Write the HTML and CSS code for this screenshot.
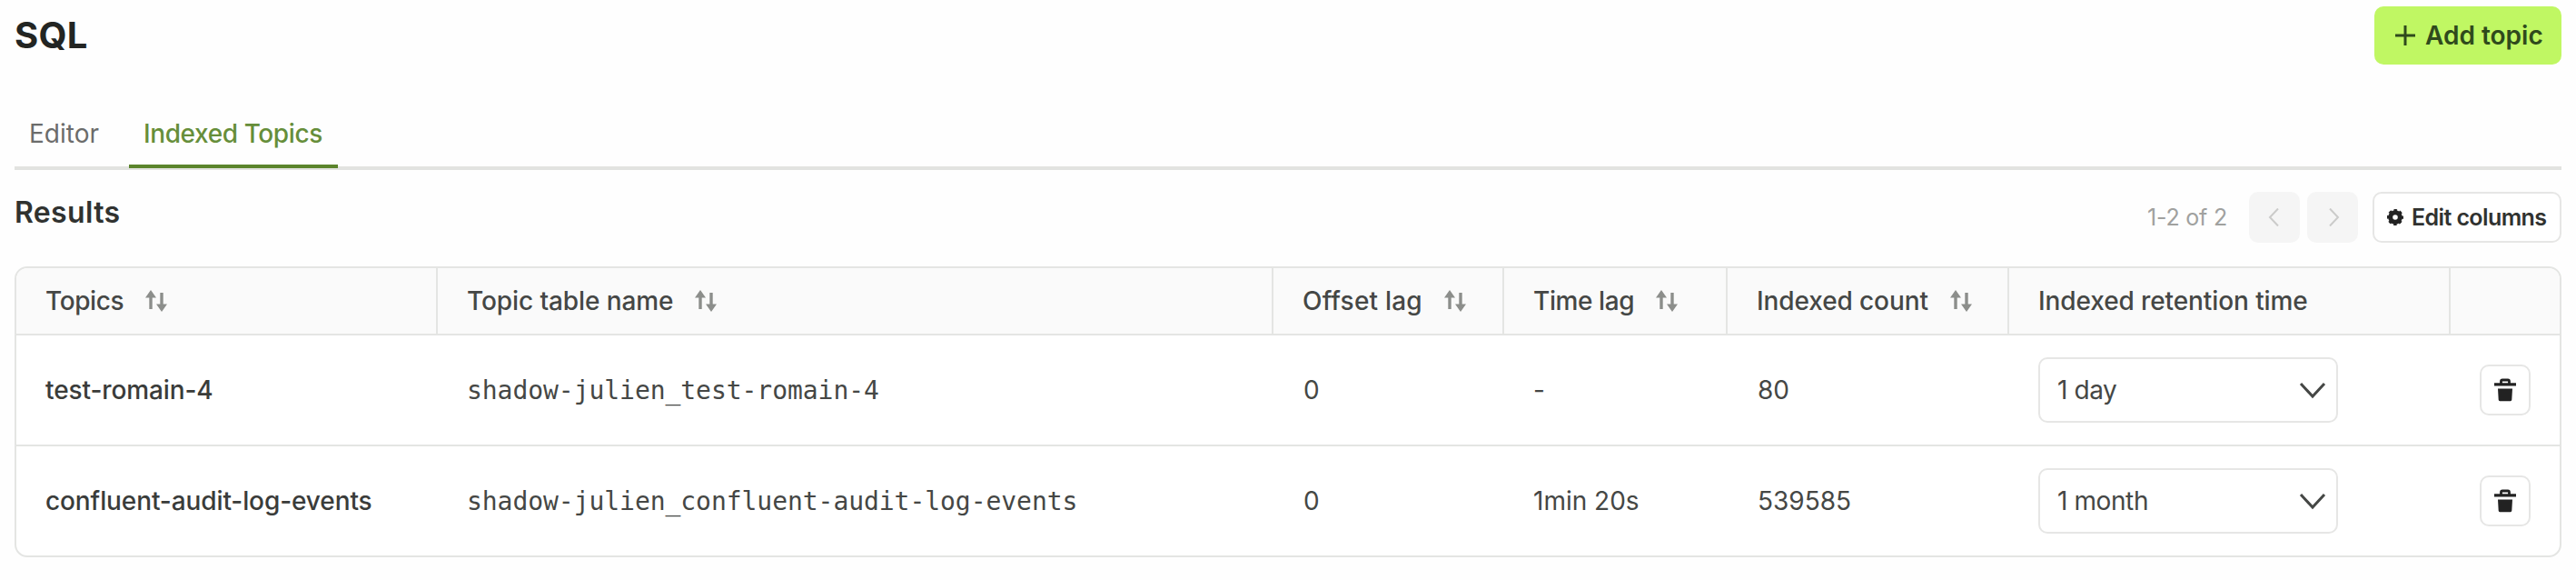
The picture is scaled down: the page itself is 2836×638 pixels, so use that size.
FILE: index.html
```html
<!DOCTYPE html>
<html lang="en">
<head>
<meta charset="utf-8">
<title>SQL</title>
<link rel="stylesheet" href="styles.css">
</head>
<body>
<svg class="defs" aria-hidden="true">
  <symbol id="sort" viewBox="0 0 24 24">
    <path d="M6 21V6M18 3v15" stroke="currentColor" stroke-width="3.400" fill="none"/>
    <path d="M6 0l6 8.500H0zM18 24l6-8.500H12z" fill="currentColor"/>
  </symbol>
  <symbol id="trash" viewBox="0 0 24 26">
    <path d="M7.500 6V3.500a1.500 1.500 0 0 1 1.500-1.500h6a1.500 1.500 0 0 1 1.500 1.500V6" stroke="currentColor" stroke-width="2.800" fill="none"/>
    <path d="M0 5.300h24v3.200H0zM4 11.500h16l-0.700 12.300a1.500 1.500 0 0 1-1.500 1.400H6.200a1.500 1.500 0 0 1-1.500-1.400z" fill="currentColor"/>
  </symbol>
  <symbol id="chevron" viewBox="0 0 30 20">
    <path d="M2 3l13 14L28 3" stroke="currentColor" stroke-width="3" fill="none"/>
  </symbol>
</svg>
<main class="page">
  <header class="top">
    <h1 class="title">SQL</h1>
    <button class="add">
      <svg class="plus" viewBox="0 0 22 22"><path d="M11 0v22M0 11h22" stroke="currentColor" stroke-width="3"/></svg>
      <span>Add topic</span>
    </button>
  </header>
  <nav class="tabs">
    <a class="tab">Editor</a>
    <a class="tab tab-active">Indexed Topics</a>
  </nav>
  <section class="bar">
    <h2 class="results">Results</h2>
    <div class="actions">
      <span class="count">1-2 of 2</span>
      <button class="pager prev"><svg viewBox="0 0 12 20"><path d="M11 0.500L2 10l9 9.500" stroke="currentColor" stroke-width="2" fill="none"/></svg></button>
      <button class="pager next"><svg viewBox="0 0 12 20"><path d="M1 0.500L10 10l-9 9.500" stroke="currentColor" stroke-width="2" fill="none"/></svg></button>
      <button class="edit">
        <svg class="gear" viewBox="-9 -9 18 18">
          <circle r="5.300" fill="none" stroke="currentColor" stroke-width="5"/>
          <circle r="7.800" fill="none" stroke="currentColor" stroke-width="2.400" stroke-dasharray="3.463 2.663" stroke-dashoffset="1.731"/>
        </svg>
        <span>Edit columns</span>
      </button>
    </div>
  </section>
  <div class="table">
    <div class="row head">
      <div class="cell tight"><span>Topics</span><svg class="sort"><use href="#sort"/></svg></div>
      <div class="cell"><span>Topic table name</span><svg class="sort"><use href="#sort"/></svg></div>
      <div class="cell loose"><span>Offset lag</span><svg class="sort"><use href="#sort"/></svg></div>
      <div class="cell tight"><span>Time lag</span><svg class="sort"><use href="#sort"/></svg></div>
      <div class="cell"><span>Indexed count</span><svg class="sort"><use href="#sort"/></svg></div>
      <div class="cell"><span>Indexed retention time</span></div>
      <div class="cell"></div>
    </div>
    <div class="row">
      <div class="cell topic">test-romain-4</div>
      <div class="cell mono">shadow-julien_test-romain-4</div>
      <div class="cell number">0</div>
      <div class="cell">-</div>
      <div class="cell number">80</div>
      <div class="cell"><div class="select"><span>1 day</span><svg class="chevron"><use href="#chevron"/></svg></div></div>
      <div class="cell"><button class="delete"><svg class="trash"><use href="#trash"/></svg></button></div>
    </div>
    <div class="row">
      <div class="cell topic">confluent-audit-log-events</div>
      <div class="cell mono">shadow-julien_confluent-audit-log-events</div>
      <div class="cell number">0</div>
      <div class="cell">1min 20s</div>
      <div class="cell number">539585</div>
      <div class="cell"><div class="select"><span>1 month</span><svg class="chevron"><use href="#chevron"/></svg></div></div>
      <div class="cell"><button class="delete"><svg class="trash"><use href="#trash"/></svg></button></div>
    </div>
  </div>
</main>
</body>
</html>
```

FILE: styles.css
```css
* { box-sizing: border-box; }
body { margin: 0; background: #fefefe; color: #454745; font-family: Inter, "Liberation Sans", sans-serif; font-size: 28px; }
button { margin: 0; padding: 0; border: 0; font: inherit; color: inherit; background: none; }
svg { display: block; flex: none; }
.defs { position: absolute; width: 0; height: 0; }
.page { display: flex; flex-direction: column; padding: 7px 16px 0; }
.top { display: flex; justify-content: space-between; height: 64px; }
.title { margin: 0; font-size: 40px; font-weight: 700; line-height: 64px; letter-spacing: 0.3px; color: #232523; }
.add { display: flex; align-items: center; gap: 11px; width: 206px; height: 64px; padding-left: 23px; border-radius: 10px; background: #c0f763; color: #2f4a1c; font-size: 28px; font-weight: 600; }
.plus { width: 22px; height: 22px; }
.tabs { display: flex; height: 116px; padding-top: 46px; border-bottom: 4px solid #e2e3e0; }
.tab { display: flex; width: 126px; height: 68px; padding-left: 16px; font-size: 28px; font-weight: 400; line-height: 60px; color: #6b6c6b; }
.tab-active { width: 230px; border-bottom: 4px solid #5b842c; color: #668e3a; font-weight: 500; letter-spacing: -0.4px; }
.bar { display: flex; justify-content: space-between; height: 106px; padding-top: 24px; }
.results { margin: 0; font-size: 32px; font-weight: 600; line-height: 46px; letter-spacing: 0.35px; color: #303230; }
.actions { display: flex; }
.count { margin-right: 24px; font-size: 25px; line-height: 56px; letter-spacing: -0.2px; color: #a0a19f; }
.pager { display: flex; align-items: center; justify-content: center; width: 56px; height: 56px; margin-right: 8px; border-radius: 10px; background: #f5f5f5; color: #cbcbca; }
.prev { padding-right: 2px; }
.next { margin-right: 16px; padding-left: 3px; }
.pager svg { width: 12px; height: 20px; }
.edit { display: flex; align-items: center; gap: 9px; width: 208px; height: 56px; padding-left: 14px; border: 2px solid #e6e6e5; border-radius: 10px; background: #fff; color: #303230; font-size: 25px; font-weight: 600; letter-spacing: -0.6px; white-space: nowrap; }
.gear { width: 18px; height: 18px; color: #222; }
.table { height: 320px; border: 2px solid #e4e5e3; border-radius: 14px; background: #fff; overflow: hidden; }
.row { display: grid; grid-template-columns: 464px 920px 254px 246px 310px 486px 120px; height: 122px; border-bottom: 2px solid #e4e5e3; }
.row:last-child { border-bottom: 0; height: 120px; }
.head { height: 74px; background: #fafafa; color: #454745; font-weight: 500; letter-spacing: -0.1px; }
.cell { display: flex; align-items: center; padding-left: 32px; white-space: nowrap; }
.head .cell { border-right: 2px solid #e4e5e3; }
.head .cell:last-child { border-right: 0; }
.tight { letter-spacing: -0.4px; }
.loose { letter-spacing: 0.2px; }
.sort { width: 24px; height: 24px; margin-left: 24px; color: #8c8e8b; }
.topic { font-weight: 500; letter-spacing: -0.1px; color: #3a3c3a; }
.mono { font-family: "DejaVu Sans Mono", monospace; font-size: 28px; letter-spacing: -0.05px; }
.number { padding-left: 33px; }
.select { display: flex; align-items: center; justify-content: space-between; width: 330px; height: 72px; padding: 0 11px 0 19px; border: 2px solid #e6e6e5; border-radius: 10px; letter-spacing: -0.4px; }
.chevron { width: 30px; height: 20px; }
.delete { display: flex; align-items: center; justify-content: center; width: 56px; height: 56px; border: 2px solid #e6e6e5; border-radius: 10px; }
.trash { width: 24px; height: 26px; color: #222; }
```
